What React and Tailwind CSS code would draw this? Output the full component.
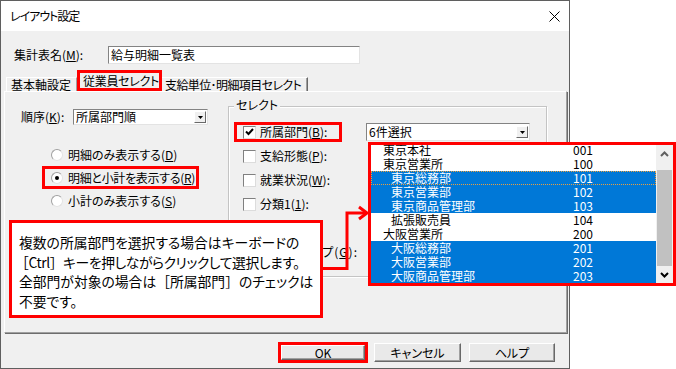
import React from "react";

const U = ({ children }) => <span className="underline underline-offset-[1px]">{children}</span>;
const FW = ({ children }) => <span className="[font-feature-settings:normal]">{children}</span>;

const listRows = [
  { n: "東京本社", c: "001", ind: false, sel: false },
  { n: "東京営業所", c: "100", ind: false, sel: false },
  { n: "東京総務部", c: "101", ind: true, sel: true, focus: true },
  { n: "東京営業部", c: "102", ind: true, sel: true },
  { n: "東京商品管理部", c: "103", ind: true, sel: true },
  { n: "拡張販売員", c: "104", ind: true, sel: false },
  { n: "大阪営業所", c: "200", ind: false, sel: false },
  { n: "大阪総務部", c: "201", ind: true, sel: true },
  { n: "大阪営業部", c: "202", ind: true, sel: true },
  { n: "大阪商品管理部", c: "203", ind: true, sel: true },
];

function SmallArrowBtn() {
  return (
    <div className="w-[12px] h-[12px] bg-[#f0f0f0] border border-t-white border-l-white border-r-[#696969] border-b-[#696969] flex items-center justify-center">
      <svg width="5" height="3" viewBox="0 0 5 3"><path d="M0 0h5L2.5 3z" fill="#000" /></svg>
    </div>
  );
}

function Radio({ checked }) {
  return (
    <div className="w-[12px] h-[12px] rounded-full border border-[#a0a0a0] border-b-[#e3e3e3] border-r-[#e3e3e3] bg-white flex items-center justify-center shrink-0">
      {checked && <div className="w-[4px] h-[4px] rounded-full bg-black" />}
    </div>
  );
}

function Check({ checked }) {
  return (
    <div className="w-[13px] h-[13px] border border-t-[#808080] border-l-[#808080] border-r-[#dcdcdc] border-b-[#dcdcdc] bg-white flex items-center justify-center shrink-0">
      {checked && (
        <svg width="9" height="8" viewBox="0 0 9 8">
          <path d="M1 3.5l2.5 2.5L8 1" stroke="#000" strokeWidth="2" fill="none" />
        </svg>
      )}
    </div>
  );
}

function Btn({ children }) {
  return (
    <div className="w-full h-full bg-[#e9e9e9] border border-t-white border-l-white border-r-[#696969] border-b-[#696969] shadow-[inset_-1px_-1px_0_#a0a0a0] flex items-center justify-center">
      {children}
    </div>
  );
}

export default function App() {
  return (
    <div className="relative w-[676px] h-[369px] bg-white overflow-hidden whitespace-nowrap text-[12px] leading-[12px] text-black [font-family:'Noto_Sans_CJK_JP','Noto_Sans',sans-serif] [font-feature-settings:'palt']">
      {/* dialog */}
      <div className="w-[570px] h-[369px] border border-[#5f5f5f] bg-[#f0f0f0] flex flex-col">
        {/* title bar */}
        <div className="h-[30px] bg-white flex items-center justify-between pl-[9px] pr-[9px] shrink-0">
          <span className="text-[12px] tracking-[-1px]">レイアウト設定</span>
          <svg width="11" height="11" viewBox="0 0 11 11">
            <path d="M0.5 0.5L10.5 10.5M10.5 0.5L0.5 10.5" stroke="#000" strokeWidth="1" />
          </svg>
        </div>

        {/* name row */}
        <div className="mt-[15px] h-[18px] flex items-center pl-[13px] shrink-0">
          <div className="w-[94px]">集計表名(<U>M</U>):</div>
          <div className="w-[252px] h-[18px] bg-white border border-t-[#838383] border-l-[#838383] border-r-[#e3e3e3] border-b-[#e3e3e3] flex items-center pl-[2px]">
            給与明細一覧表
          </div>
        </div>

        {/* tabs */}
        <div className="mt-[6px] h-[21px] flex items-end pl-[5px] shrink-0">
          <div className="w-[71px] h-[14px] border-l border-t border-l-white border-t-white border-r border-r-[#a0a0a0] flex items-center pl-[4px]">
            基本軸設定
          </div>
          <div className="w-[85px] h-[21px] border-[3px] border-[#ff0000] bg-[#f0f0f0] flex items-center pl-[3px] tracking-[-0.3px]">
            従業員セレクト
          </div>
          <div className="w-[146px] h-[14px] border-t border-t-white border-r border-r-[#696969] shadow-[inset_-1px_0_0_#a0a0a0] flex items-center pl-[3px] tracking-[-0.6px]">
            支給単位･明細項目セレクト
          </div>
        </div>

        {/* panel */}
        <div className="ml-[3px] w-[563px] h-[242px] border border-t-white border-l-white border-r-[#a0a0a0] border-b-[#a0a0a0] shadow-[1px_1px_0_#6d6d6d] flex shrink-0">
          {/* left column */}
          <div className="ml-[16px] w-[207px] flex flex-col shrink-0">
            <div className="mt-[17px] h-[16px] flex items-center">
              <div className="w-[52px]">順序(<U>K</U>):</div>
              <div className="w-[135px] h-[16px] bg-white border border-t-[#838383] border-l-[#838383] border-r-[#e3e3e3] border-b-[#e3e3e3] flex items-center justify-between pl-[2px] pr-[1px]">
                <span>所属部門順</span>
                <SmallArrowBtn />
              </div>
            </div>
            <div className="mt-[18px] ml-[21px] flex flex-col">
              <div className="w-[157px] h-[23px] border-[3px] border-transparent flex items-center pl-[6px] gap-[5px]">
                <Radio />
                <span>明細のみ表示する(<U>D</U>)</span>
              </div>
              <div className="w-[157px] h-[23px] border-[3px] border-[#ff0000] flex items-center pl-[6px] gap-[5px]">
                <Radio checked />
                <span className="tracking-[-0.3px]">明細と小計を表示する(<U>R</U>)</span>
              </div>
              <div className="w-[157px] h-[23px] border-[3px] border-transparent flex items-center pl-[6px] gap-[5px]">
                <Radio />
                <span>小計のみ表示する(<U>S</U>)</span>
              </div>
            </div>
          </div>

          {/* group box */}
          <div className="relative mt-[14px] w-[319px] h-[171px] border border-[#c4c4c4] shadow-[inset_1px_1px_0_#fff,1px_1px_0_#fff] shrink-0">
            <div className="absolute -top-[8px] left-[5px] px-[2px] bg-[#f0f0f0]">セレクト</div>
            <div className="pt-[13px] flex flex-col">
              <div className="h-[24px] flex items-center">
                <div className="ml-[5px] w-[108px] h-[20px] border-[3px] border-[#ff0000] flex items-center pl-[6px] gap-[4px]">
                  <Check checked />
                  <span>所属部門(<U>B</U>):</span>
                </div>
                <div className="ml-[24px] w-[164px] h-[18px] bg-white border border-t-[#838383] border-l-[#838383] border-r-[#e3e3e3] border-b-[#e3e3e3] flex items-center justify-between pl-[2px] pr-[1px]">
                  <span>6件選択</span>
                  <SmallArrowBtn />
                </div>
              </div>
              {[
                ["支給形態(", "P", "):", ""],
                ["就業状況(", "W", "):", ""],
                ["分類1(", "1", "):", ""],
                ["分類2(", "2", "):", ""],
                ["所属グループ(", "G", "):", "tracking-[1px]"],
              ].map(([a, m, b, cls]) => (
                <div key={a} className="h-[24px] flex items-center">
                  <div className="ml-[5px] h-[20px] border-[3px] border-transparent flex items-center pl-[6px] gap-[4px]">
                    <Check />
                    <span className={cls}>
                      {a}
                      <U>{m}</U>
                      {b}
                    </span>
                  </div>
                </div>
              ))}
            </div>
          </div>
        </div>

        {/* buttons */}
        <div className="mt-[9px] h-[21px] flex justify-end items-center pr-[14px] shrink-0">
          <div className="w-[90px] h-[21px] border-[3px] border-[#ff0000]">
            <Btn>OK</Btn>
          </div>
          <div className="ml-[6px] w-[87px] h-[19px]">
            <Btn>キャンセル</Btn>
          </div>
          <div className="ml-[8px] w-[86px] h-[19px]">
            <Btn>ヘルプ</Btn>
          </div>
        </div>
      </div>

      {/* dropdown list overlay */}
      <div className="absolute left-[368px] top-[142px] w-[308px] h-[144px] border-[3px] border-[#ff0000] bg-white flex overflow-hidden">
        <div className="w-[285px] h-[138px] overflow-hidden">
          <div className="-mt-[2px]">
            {listRows.map((r) => (
              <div
                key={r.c}
                className={`h-[14px] flex items-center ${r.sel ? "bg-[#0078d7] text-white" : "bg-white text-black"} ${r.focus ? "outline-1 outline-dotted -outline-offset-1 outline-[#e8a040]" : ""}`}
              >
                <div className={`w-[202px] ${r.ind ? "pl-[20px]" : "pl-[12px]"}`}>{r.n}</div>
                <div>{r.c}</div>
              </div>
            ))}
          </div>
        </div>
        {/* scrollbar */}
        <div className="w-[17px] h-[138px] bg-[#f0f0f0] flex flex-col">
          <div className="h-[17px] flex items-center justify-center">
            <svg width="9" height="6" viewBox="0 0 9 6"><path d="M1 5l3.5-3.5L8 5" stroke="#606060" strokeWidth="2" fill="none" /></svg>
          </div>
          <div className="flex-1 flex flex-col px-[1px]">
            <div className="mt-[8px] h-[96px] bg-[#c1c1c1]" />
          </div>
          <div className="h-[17px] flex items-center justify-center">
            <svg width="9" height="6" viewBox="0 0 9 6"><path d="M1 1l3.5 3.5L8 1" stroke="#000" strokeWidth="2" fill="none" /></svg>
          </div>
        </div>
      </div>

      {/* callout */}
      <div className="absolute left-[9px] top-[220px] w-[314px] h-[98px] border-[3px] border-[#ff0000] bg-white pl-[7px] pt-[10px] text-[13.8px] leading-[19.5px]">
        <div>複数の所属部門を選択する場合はキーボードの</div>
        <div className="-ml-[4px] tracking-[-0.4px]"><FW>［</FW>Ctrl<FW>］</FW>キーを押しながらクリックして選択します。</div>
        <div>全部門が対象の場合は<FW>［</FW>所属部門<FW>］</FW>のチェックは</div>
        <div>不要です。</div>
      </div>

      {/* arrow */}
      <svg className="absolute left-[320px] top-[204px]" width="52" height="68" viewBox="0 0 52 68">
        <path d="M3 64.5H27V9H46" stroke="#ff0000" strokeWidth="3" fill="none" />
        <path d="M39 3L47 9L39 15" stroke="#ff0000" strokeWidth="3" fill="none" />
      </svg>
    </div>
  );
}
